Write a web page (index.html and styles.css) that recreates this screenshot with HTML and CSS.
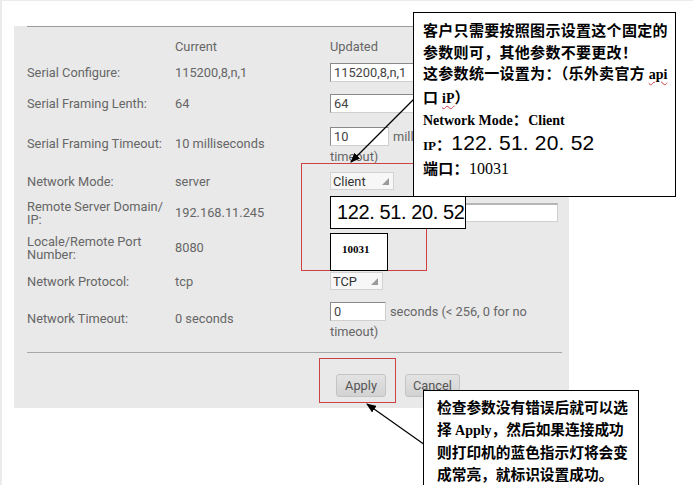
FILE: index.html
```html
<!DOCTYPE html>
<html lang="zh-CN">
<head>
  <meta charset="UTF-8">
  <title>Network Settings</title>
  <link rel="stylesheet" href="styles.css">
</head>
<body>
  <div class="page">
    <div class="panel">
      <div class="form">
        <div class="row head">
          <span></span>
          <span>Current</span>
          <span>Updated</span>
        </div>
        <div class="row r1">
          <span>Serial Configure:</span>
          <span>115200,8,n,1</span>
          <span><span class="input wide">115200,8,n,1</span></span>
        </div>
        <div class="row r2">
          <span>Serial Framing Lenth:</span>
          <span>64</span>
          <span><span class="input wide">64</span></span>
        </div>
        <div class="row r3">
          <span>Serial Framing Timeout:</span>
          <span>10 milliseconds</span>
          <div class="upd two">
            <div class="line"><span class="input ms">10</span><span class="hint">milliseconds (&lt; 256, 0 for no</span></div>
            <div class="line">timeout)</div>
          </div>
        </div>
        <div class="row r4">
          <span>Network Mode:</span>
          <span>server</span>
          <span><span class="select client">Client<i class="arrow"></i></span></span>
        </div>
        <div class="row r5">
          <span>Remote Server Domain/<br>IP:</span>
          <span>192.168.11.245</span>
          <span><span class="input full"></span></span>
        </div>
        <div class="row r6">
          <span>Locale/Remote Port<br>Number:</span>
          <span>8080</span>
          <span><span class="input port"></span></span>
        </div>
        <div class="row r7">
          <span>Network Protocol:</span>
          <span>tcp</span>
          <span><span class="select tcp">TCP<i class="arrow"></i></span></span>
        </div>
        <div class="row r8">
          <span>Network Timeout:</span>
          <span>0 seconds</span>
          <div class="upd two">
            <div class="line"><span class="input sec">0</span><span class="hint">seconds (&lt; 256, 0 for no</span></div>
            <div class="line">timeout)</div>
          </div>
        </div>
      </div>
      <div class="actions">
        <button class="btn apply">Apply</button>
        <button class="btn cancel">Cancel</button>
      </div>
    </div>

    <!-- annotations -->
    <div class="mark mark-net"></div>
    <div class="mark mark-apply"></div>
    <div class="tag tag-ip">122. 51. 20. 52</div>
    <div class="tag tag-port">10031</div>

    <svg class="arrows" width="693" height="485" viewBox="0 0 693 485">
      <defs>
        <marker id="head" markerWidth="10" markerHeight="8" refX="9" refY="4" orient="auto" markerUnits="userSpaceOnUse">
          <path d="M0 0 L10 4 L0 8 Z" fill="#000"/>
        </marker>
      </defs>
      <line x1="417" y1="96" x2="351" y2="162" stroke="#000" stroke-width="1.2" marker-end="url(#head)"/>
      <line x1="425" y1="445" x2="367" y2="404" stroke="#000" stroke-width="1.2" marker-end="url(#head)"/>
    </svg>

    <div class="note note-top">
      <div>客户只需要按照图示设置这个固定的</div>
      <div>参数则可，其他参数不要更改！</div>
      <div>这参数统一设置为：（乐外卖官方 <span class="latin wavy">api</span></div>
      <div>口 <span class="latin wavy">iP</span>）</div>
      <div class="mode-line"><span class="latin">Network Mode</span>：<span class="latin">Client</span></div>
      <div class="ip-line"><span class="latin small">IP</span>：<span class="big">122. 51. 20. 52</span></div>
      <div class="port-line">端口：<span class="num">10031</span></div>
    </div>

    <div class="note note-bottom">
      <div>检查参数没有错误后就可以选</div>
      <div>择 <span class="latin">Apply</span>，然后如果连接成功</div>
      <div>则打印机的蓝色指示灯将会变</div>
      <div>成常亮，就标识设置成功。</div>
    </div>
  </div>
</body>
</html>
```

FILE: styles.css
```css
/* Base */
body {
    margin: 0;
    background: #fff;
    font-family: Roboto, "Liberation Sans", sans-serif;
}

.page {
    position: relative;
    width: 693px;
    height: 485px;
    box-sizing: border-box;
    padding: 26px 0 0 14px;
    overflow: hidden;
    box-shadow: inset 2px 1px 0 #ebebeb;
}

/* Settings panel */
.panel {
    width: 555px;
    height: 382px;
    box-sizing: border-box;
    padding: 0 11px 0 13px;
    background: #e9e9e9;
}

.form {
    border-top: 1px solid #9c9c9c;
}

.row {
    display: grid;
    grid-template-columns: 148px 155px 1fr;
    align-items: center;
    font-size: 12.8px;
    line-height: 13px;
    color: #666;
}

.head { height: 32px; align-items: end; padding-bottom: 6px; box-sizing: border-box; }
.r1 { height: 27px; }
.r2 { height: 34px; }
.r3 { height: 45px; }
.r4 { height: 32px; }
.r5 { height: 31px; }
.r6 { height: 39px; }
.r7 { height: 28px; }
.r8 { height: 44px; }

.upd.two {
    align-self: start;
    padding-top: 6px;
    white-space: nowrap;
}
.upd .line {
    display: flex;
    align-items: center;
    height: 20px;
}
.hint { margin-left: 4px; }

.input {
    display: inline-block;
    vertical-align: middle;
    height: 19px;
    box-sizing: border-box;
    padding: 2px 3px 0;
    line-height: 14px;
    background: #fff;
    color: #444;
    border: 1px solid #cfcfcf;
    border-top-color: #8a8a8a;
    border-left-color: #8a8a8a;
}
.input.wide { width: 130px; }
.input.ms { width: 59px; }
.input.sec { width: 56px; }
.input.port { width: 56px; }
.input.full { width: 228px; border-top: 2px solid #b5b5b5; }

.select {
    display: inline-flex;
    align-items: center;
    justify-content: space-between;
    height: 18px;
    box-sizing: border-box;
    padding: 0 4px 0 2px;
    background: #f7f7f7;
    border: 1px solid #d2d2d2;
    color: #333;
}
.select.client { width: 64px; }
.select.tcp { width: 53px; }
.arrow {
    width: 0;
    height: 0;
    border-left: 7px solid transparent;
    border-bottom: 7px solid #9a9a9a;
}

/* Buttons */
.actions {
    margin: 13px -4px 0 0;
    padding: 21px 0 0 309px;
    border-top: 1px solid #a8a8a8;
    display: flex;
    gap: 19px;
}
.btn {
    height: 23px;
    padding: 0;
    font-family: Roboto, "Liberation Sans", sans-serif;
    font-size: 12.8px;
    color: #555;
    background: linear-gradient(#e3e3e3, #d2d2d2);
    border: 1px solid #c4c4c4;
    border-radius: 3px;
}
.apply { width: 50px; }
.cancel { width: 55px; }

/* Annotations */
.mark {
    position: absolute;
    border: 1px solid #cc4141;
}
.mark-net { left: 301px; top: 163px; width: 124px; height: 106px; }
.mark-apply { left: 319px; top: 358px; width: 75px; height: 43px; }

.tag {
    position: absolute;
    box-sizing: border-box;
    background: #fff;
    border: 1.5px solid #000;
    color: #000;
}
.tag-ip {
    left: 330px;
    top: 196px;
    width: 136px;
    height: 33px;
    padding: 4px 0 0 6px;
    font-family: "Liberation Sans", Arial, sans-serif;
    font-size: 20px;
    letter-spacing: -0.4px;
}
.tag-port {
    left: 330px;
    top: 233px;
    width: 58px;
    height: 38px;
    padding: 9px 0 0 11px;
    font-family: "Liberation Serif", serif;
    font-weight: bold;
    font-size: 11px;
}

.arrows {
    position: absolute;
    left: 0;
    top: 0;
    pointer-events: none;
}

.note {
    position: absolute;
    box-sizing: border-box;
    background: #fff;
    border: 1.5px solid #000;
    font-family: "Noto Sans CJK SC", sans-serif;
    font-weight: bold;
    color: #000;
}
.note-top {
    left: 413px;
    top: 12px;
    width: 263px;
    height: 185px;
    padding: 6px 0 0 9px;
    font-size: 15px;
    letter-spacing: 0.3px;
    line-height: 21.5px;
}
.note-top .mode-line { line-height: 20px; }
.note-top .ip-line { line-height: 23px; }
.note-top .port-line { line-height: 21px; }

.note-bottom {
    left: 423px;
    top: 390px;
    width: 216px;
    height: 110px;
    padding: 5px 0 0 13px;
    font-size: 14.7px;
    line-height: 21.7px;
}

.latin {
    font-family: "Liberation Serif", serif;
    font-size: 14px;
    letter-spacing: 0;
}
.latin.small { font-size: 13px; }
.wavy {
    text-decoration: underline wavy #d04040;
    text-decoration-thickness: 1px;
    text-underline-offset: 2px;
}
.big {
    font-family: "Liberation Sans", Arial, sans-serif;
    font-weight: normal;
    font-size: 21px;
    letter-spacing: 0.2px;
}
.num {
    font-family: "Liberation Serif", serif;
    font-weight: normal;
    font-size: 16px;
    letter-spacing: 0;
}
```
